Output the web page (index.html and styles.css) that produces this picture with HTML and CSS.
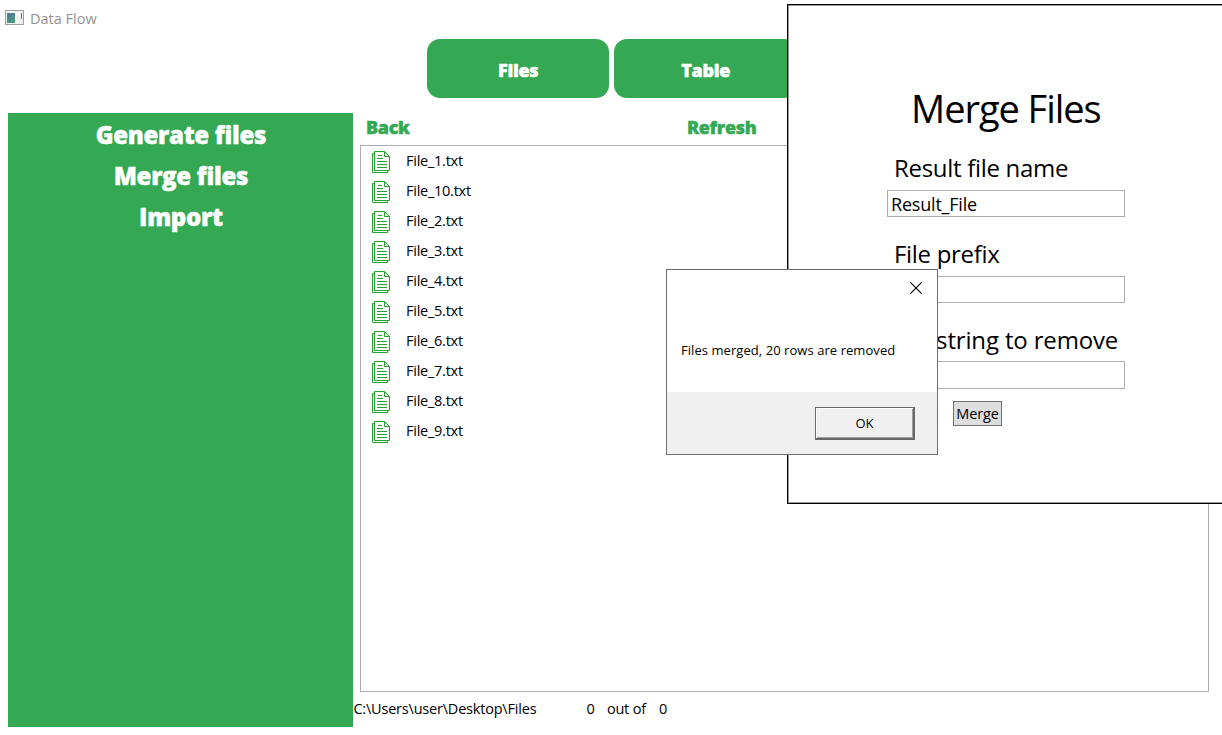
FILE: index.html
```html
<!DOCTYPE html>
<html lang="en">
<head>
<meta charset="utf-8">
<title>Data Flow</title>
<link rel="stylesheet" href="styles.css">
</head>
<body>
<svg class="defs" width="0" height="0">
  <symbol id="doc" viewBox="0 0 18 22">
    <path d="M2.500 .5H12.500L17.500 5.500V19.500H2.500ZM12.500 .5V5.500H17.500M2.500 2.500H.5V21.500H15.500V19.500" fill="none" stroke="#22a22b"/>
    <path d="M6 4.500H10M5 7.500H11M5 10.500H15M5 13.500H15M5 16.500H15" fill="none" stroke="#22a22b"/>
  </symbol>
</svg>
<div class="app">
  <header class="titlebar">
    <svg class="app-icon" width="20" height="16" viewBox="0 0 20 16">
      <defs><linearGradient id="pane" x2="1" y2="1"><stop stop-color="#4c769b"/><stop offset="1" stop-color="#4da078"/></linearGradient></defs>
      <rect x=".5" y=".5" width="18" height="14" fill="#f2f5f4" stroke="#98a09e"/>
      <rect x="2" y="3" width="8" height="10" fill="url(#pane)"/>
      <path d="M16.500 3V9" stroke="#527c68"/>
    </svg>
    <span class="app-name">Data Flow</span>
  </header>
  <nav class="tabs">
    <div class="tab">Files</div>
    <div class="tab">Table</div>
  </nav>
  <div class="body">
    <aside class="side">
      <div>Generate files</div>
      <div>Merge files</div>
      <div>Import</div>
    </aside>
    <main class="main">
      <div class="actions"><span class="back">Back</span><span>Refresh</span></div>
      <div class="list">
        <div class="row"><svg class="doc"><use href="#doc"/></svg><span>File_1.txt</span></div>
        <div class="row"><svg class="doc"><use href="#doc"/></svg><span>File_10.txt</span></div>
        <div class="row"><svg class="doc"><use href="#doc"/></svg><span>File_2.txt</span></div>
        <div class="row"><svg class="doc"><use href="#doc"/></svg><span>File_3.txt</span></div>
        <div class="row"><svg class="doc"><use href="#doc"/></svg><span>File_4.txt</span></div>
        <div class="row"><svg class="doc"><use href="#doc"/></svg><span>File_5.txt</span></div>
        <div class="row"><svg class="doc"><use href="#doc"/></svg><span>File_6.txt</span></div>
        <div class="row"><svg class="doc"><use href="#doc"/></svg><span>File_7.txt</span></div>
        <div class="row"><svg class="doc"><use href="#doc"/></svg><span>File_8.txt</span></div>
        <div class="row"><svg class="doc"><use href="#doc"/></svg><span>File_9.txt</span></div>
      </div>
      <footer class="status"><span class="path">C:\Users\user\Desktop\Files</span><span class="n1">0</span><span class="of">out of</span><span>0</span></footer>
    </main>
  </div>
</div>
<section class="merge">
  <h1 class="merge-title">Merge Files</h1>
  <div class="label">Result file name</div>
  <div class="input">Result_File</div>
  <div class="label">File prefix</div>
  <div class="input"></div>
  <div class="label remove">Substring to remove</div>
  <div class="input last"></div>
  <button class="merge-btn">Merge</button>
</section>
<section class="dialog">
  <div class="dialog-head"><svg width="12" height="12" viewBox="0 0 12 12"><path d="M0 0L12 12M12 0L0 12" stroke="#000" stroke-width="1.100"/></svg></div>
  <p class="message">Files merged, 20 rows are removed</p>
  <div class="dialog-foot"><button class="ok">OK</button></div>
</section>
</body>
</html>
```
FILE: styles.css
```css
* { box-sizing: border-box; }
body { margin: 0; width: 1222px; height: 735px; overflow: hidden; background: #fff; color: #000; font-family: "Open Sans", "Noto Sans", sans-serif; position: relative; }
.defs { position: absolute; }
.app { height: 735px; display: flex; flex-direction: column; }
.titlebar { height: 39.4px; padding: 8px 0 0 5px; display: flex; align-items: flex-start; gap: 5px; }
.app-icon { margin-top: 2px; flex: none; }
.app-name { font-size: 14.5px; line-height: 21px; color: #929292; }
.tab, .side, .actions { font-family: "Open Sans", sans-serif; font-weight: 800; -webkit-text-stroke: .45px currentColor; font-variant-ligatures: none; }
.tabs { display: flex; gap: 5px; padding-left: 427px; height: 59px; }
.tab { width: 182.400px; height: 59px; border-radius: 13px; background: #34a853; color: #fff; font-size: 18px; line-height: 62px; text-align: center; letter-spacing: -.3px; }
.body { display: flex; padding: 15px 0 0 8.400px; height: 629px; }
.side { width: 345px; height: 614px; flex: none; background: #34a853; color: #fff; padding-top: 1px; text-align: center; font-size: 24px; line-height: 41px; letter-spacing: -.3px; }
.main { width: 856px; display: flex; flex-direction: column; }
.actions { height: 31.600px; padding-left: 12.500px; display: flex; color: #34a853; font-size: 18px; line-height: 28px; letter-spacing: -.3px; }
.back { width: 321px; }
.list { width: 849px; height: 547px; margin-left: 6.600px; border: 1px solid #abadb3; }
.row { height: 30px; padding-left: 11px; display: flex; gap: 16px; font-size: 14.500px; line-height: 29px; letter-spacing: -.25px; }
.doc { width: 18px; height: 22px; margin-top: 5px; flex: none; }
.status { display: flex; font-size: 14.500px; line-height: 33px; letter-spacing: -.2px; }
.path { width: 233px; }
.n1 { width: 20.500px; }
.of { width: 52px; }
.merge { position: absolute; left: 787px; top: 4px; width: 440px; height: 500px; border: 1px solid #000; box-shadow: inset 1px 1px #999, inset 0 -1px #999; background: #fff; padding: 73px 0 0 99px; }
.merge-title { margin: 0 0 0 24px; font-size: 38px; font-weight: 400; line-height: 60px; letter-spacing: -1.050px; white-space: nowrap; }
.label { padding-left: 7px; height: 52px; padding-top: 12px; font-size: 24px; line-height: 36px; letter-spacing: -.3px; white-space: nowrap; }
.label.remove { height: 51px; letter-spacing: -.15px; }
.input { width: 238px; height: 27px; border: 1px solid #abadb3; padding-left: 3px; font-size: 18px; line-height: 26px; letter-spacing: -.2px; margin-bottom: 7px; }
.input.last { height: 28px; }
.merge-btn { display: block; width: 49px; height: 25px; margin: 12px 0 0 66px; padding: 0; border: 1px solid #707070; background: #ddd; color: #000; font: 14.500px/24px "Open Sans", sans-serif; letter-spacing: -.1px; }
.dialog { position: absolute; left: 666px; top: 269px; width: 272px; height: 186px; border: 1px solid #6e6e6e; background: #fff; display: flex; flex-direction: column; }
.dialog-head { height: 68px; padding: 12px 15px 0 0; display: flex; justify-content: flex-end; }
.message { margin: 0; padding-left: 14px; height: 54px; font-size: 13px; line-height: 24px; letter-spacing: .06px; white-space: nowrap; }
.dialog-foot { flex: 1; background: #f0f0f0; padding: 15px 22px 0 0; display: flex; justify-content: flex-end; }
.ok { width: 100px; height: 33px; padding: 0; border: 1px solid #696969; border-right-width: 2px; border-bottom-width: 2px; box-shadow: inset 1px 1px #fff, inset -1px -1px #a0a0a0; background: #f0f0f0; color: #000; font: 13px/30px "Open Sans", sans-serif; }
```
